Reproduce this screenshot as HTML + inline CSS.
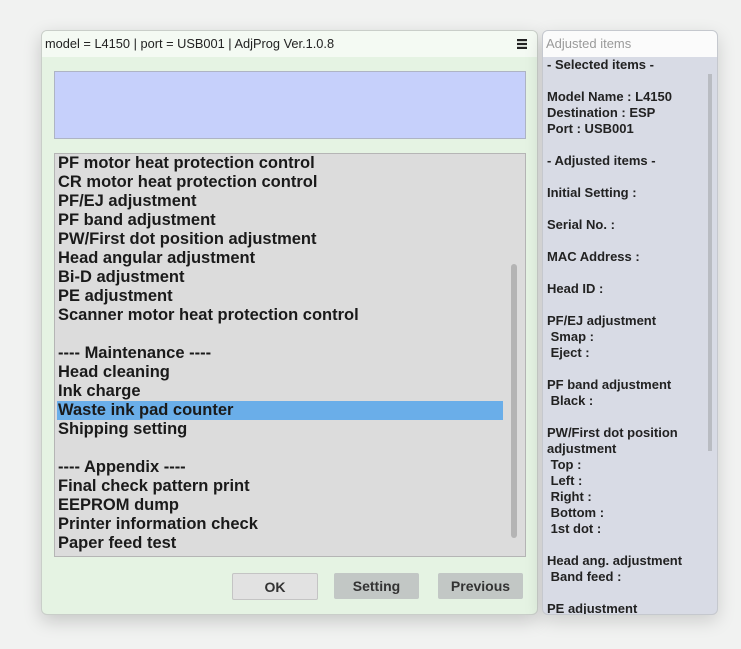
<!DOCTYPE html>
<html><head><style>
body{margin:0;width:741px;height:649px;background:#f1f2f1;position:relative;overflow:hidden;font-family:"Liberation Sans",sans-serif}
.win{position:absolute;left:41px;top:30px;width:495px;height:583px;background:#e5f3e3;border:1px solid #c9cec9;border-radius:6px;box-shadow:0 6px 18px rgba(0,0,0,.18);overflow:hidden}
.tb{height:26px;background:#f4faf3;font-size:12.8px;color:#222;line-height:26px;padding-left:3px;position:relative}
.blue{position:absolute;left:12px;top:40px;width:470px;height:66px;background:#c6d0fb;border:1px solid #aeb4c4}
.list{position:absolute;left:12px;top:122px;width:470px;height:402px;background:#dcdcdc;border:1px solid #b5b5b5}
.list div{height:19px;line-height:19px;font-weight:bold;font-size:16.5px;color:#1a1a1a;padding-left:3px;white-space:nowrap}
.sel{background:#6aaee9;width:445px;margin-left:2px;padding-left:1px!important}
.sb{position:absolute;left:469px;top:233px;width:6px;height:274px;background:#b4b4b4;border-radius:3px}
.btn{position:absolute;top:542px;width:85px;height:26px;font-size:14px;font-weight:bold;color:#333;text-align:center;line-height:26px;background:#c2c7c5;border-radius:2px}
.rp{position:absolute;left:542px;top:30px;width:174px;height:583px;background:#d8dbe5;border:1px solid #c5c8ce;border-radius:6px;overflow:hidden;box-shadow:0 6px 18px rgba(0,0,0,.15)}
.rh{height:26px;background:#fbfbfb;color:#9a9a9a;font-size:13px;line-height:26px;padding-left:3px}
.rt{padding-left:4px;font-size:13px;font-weight:bold;color:#222;line-height:16px;white-space:pre;margin-top:0}
</style></head><body>
<div class="win">
<div class="tb">model = L4150 | port = USB001 | AdjProg Ver.1.0.8
<svg style="position:absolute;right:10px;top:8px" width="10" height="10"><rect x="0" y="0" width="10" height="2.2" fill="#222"/><rect x="0" y="3.9" width="10" height="2.2" fill="#222"/><rect x="0" y="7.8" width="10" height="2.2" fill="#222"/></svg></div>
<div class="blue"></div>
<div class="list">
<div>PF motor heat protection control</div>
<div>CR motor heat protection control</div>
<div>PF/EJ adjustment</div>
<div>PF band adjustment</div>
<div>PW/First dot position adjustment</div>
<div>Head angular adjustment</div>
<div>Bi-D adjustment</div>
<div>PE adjustment</div>
<div>Scanner motor heat protection control</div>
<div></div>
<div>---- Maintenance ----</div>
<div>Head cleaning</div>
<div>Ink charge</div>
<div class="sel">Waste ink pad counter</div>
<div>Shipping setting</div>
<div></div>
<div>---- Appendix ----</div>
<div>Final check pattern print</div>
<div>EEPROM dump</div>
<div>Printer information check</div>
<div>Paper feed test</div>
</div>
<div class="sb"></div>
<div class="btn" style="left:190px;background:#e2e2e2;border:1px solid #c4c4c4;width:84px;height:25px">OK</div>
<div class="btn" style="left:292px">Setting</div>
<div class="btn" style="left:396px">Previous</div>
</div>
<div class="rp">
<div class="rh">Adjusted items</div>
<div style="position:absolute;left:165px;top:43px;width:4px;height:377px;background:#b9bcc2"></div>
<div class="rt" style="margin-top:0">- Selected items -

Model Name : L4150
Destination : ESP
Port : USB001

- Adjusted items -

Initial Setting :

Serial No. :

MAC Address :

Head ID :

PF/EJ adjustment
 Smap :
 Eject :

PF band adjustment
 Black :

PW/First dot position
adjustment
 Top :
 Left :
 Right :
 Bottom :
 1st dot :

Head ang. adjustment
 Band feed :

PE adjustment</div>
</div>
</body></html>
